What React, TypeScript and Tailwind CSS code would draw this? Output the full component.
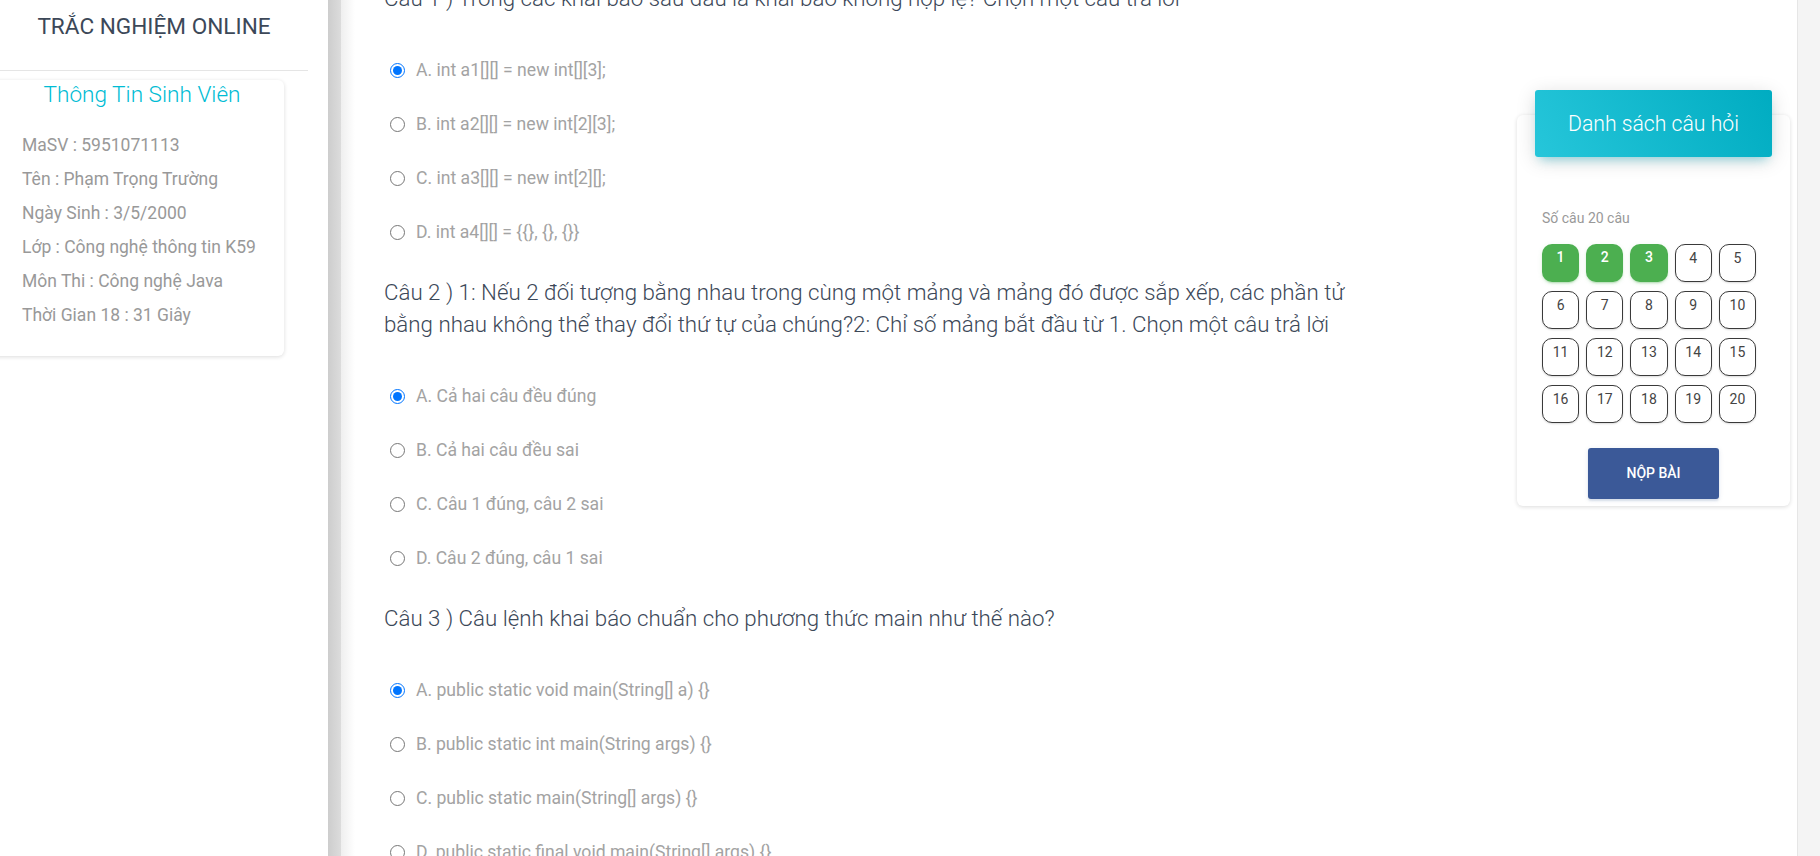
const student = [
  'MaSV : 5951071113',
  'Tên : Phạm Trọng Trường',
  'Ngày Sinh : 3/5/2000',
  'Lớp : Công nghệ thông tin K59',
  'Môn Thi : Công nghệ Java',
  'Thời Gian 18 : 31 Giây',
]

const questions = [
  {
    title: 'Câu 1 ) Trong các khai báo sau đâu là khai báo không hợp lệ? Chọn một câu trả lời',
    answers: ['A. int a1[][] = new int[][3];', 'B. int a2[][] = new int[2][3];', 'C. int a3[][] = new int[2][];', 'D. int a4[][] = {{}, {}, {}}'],
  },
  {
    title:
      'Câu 2 ) 1: Nếu 2 đối tượng bằng nhau trong cùng một mảng và mảng đó được sắp xếp, các phần tử bằng nhau không thể thay đổi thứ tự của chúng?2: Chỉ số mảng bắt đầu từ 1. Chọn một câu trả lời',
    answers: ['A. Cả hai câu đều đúng', 'B. Cả hai câu đều sai', 'C. Câu 1 đúng, câu 2 sai', 'D. Câu 2 đúng, câu 1 sai'],
  },
  {
    title: 'Câu 3 ) Câu lệnh khai báo chuẩn cho phương thức main như thế nào?',
    answers: [
      'A. public static void main(String[] a) {}',
      'B. public static int main(String args) {}',
      'C. public static main(String[] args) {}',
      'D. public static final void main(String[] args) {}',
    ],
  },
]

const numbers = Array.from({ length: 20 }, (_, i) => i + 1)
const done = [1, 2, 3]

export default function App() {
  return (
    <div className="flex h-[856px] w-[1820px] overflow-hidden bg-white font-['Roboto',sans-serif]">
      {/* sidebar */}
      <aside className="w-[328px] shrink-0 overflow-hidden bg-white">
        <div className="w-[308px]">
          <h1 className="pt-[12px] pb-[10px] text-center text-[22.6px] leading-[30px] text-[#3c4858]">TRẮC NGHIỆM ONLINE</h1>
          <div className="mt-[18px] h-px bg-[#e5e5e5]" />
        </div>
        <div className="mt-[9px] -ml-[10px] w-[294px] rounded-[6px] bg-white pb-[24px] pl-[32px] shadow-[0_1px_4px_0_rgba(0,0,0,0.14)]">
          <h2 className="-ml-[22px] text-center text-[22.6px] font-light leading-[30px] text-[#00bcd4]">Thông Tin Sinh Viên</h2>
          <ul className="mt-[18px]">
            {student.map((line) => (
              <li key={line} className="text-[17.5px] leading-[34px] text-[#999]">{line}</li>
            ))}
          </ul>
        </div>
      </aside>

      <div className="w-[13px] shrink-0 bg-gradient-to-r from-[#cdcdcd] to-[#dcdcdc]" />

      {/* main */}
      <main className="flex flex-1 justify-between bg-[linear-gradient(to_right,#efefef,#ffffff_14px)] pl-[43px] pr-[7px]">
        <div className="w-[990px] -mt-[18px]">
          {questions.map((q, qi) => (
            <div key={qi} className="mb-[17px]">
              <p className="mb-[29px] text-[22.3px] font-light leading-[32px] text-[#3c4858]">{q.title}</p>
              {q.answers.map((a, ai) => (
                <label key={a} className="flex h-[54px] items-center">
                  <input type="radio" name={`q${qi}`} defaultChecked={ai === 0} className="ml-[6px] mr-[11px] h-[15px] w-[15px]" />
                  <span className="text-[17.6px] text-[#a3a3a3]">{a}</span>
                </label>
              ))}
            </div>
          ))}
        </div>

        <div className="mt-[115px] h-[391px] w-[273px] rounded-[6px] bg-white shadow-[0_1px_4px_0_rgba(0,0,0,0.14)]">
          <div className="mx-[18px] -mt-[25px] flex h-[67px] items-center justify-center rounded-[3px] bg-[linear-gradient(60deg,#26c6da,#00acc1)] shadow-[0_4px_20px_0_rgba(0,0,0,0.14),0_7px_10px_-5px_rgba(0,188,212,0.4)]">
            <span className="text-[21.2px] font-light text-white">Danh sách câu hỏi</span>
          </div>
          <div className="pl-[25px] pr-[16px]">
            <p className="mt-[51px] text-[14px] leading-[20px] text-[#999]">Số câu 20 câu</p>
            <div className="mt-[16px] grid w-[214px] grid-cols-5 gap-x-[7px] gap-y-[9px]">
              {numbers.map((n) =>
                done.includes(n) ? (
                  <div
                    key={n}
                    className="h-[38px] rounded-[10px] bg-[#4caf50] pt-[3px] text-center text-[14px] font-medium leading-[20px] text-white shadow-[0_2px_2px_0_rgba(76,175,80,0.14),0_3px_1px_-2px_rgba(76,175,80,0.2),0_1px_5px_0_rgba(76,175,80,0.12)]"
                  >
                    {n}
                  </div>
                ) : (
                  <div
                    key={n}
                    className="h-[38px] rounded-[10px] border border-[#3a3a3a] bg-white pt-[3px] text-center text-[14px] leading-[20px] text-[#444] shadow-[0_1px_2px_0_rgba(0,0,0,0.15)]"
                  >
                    {n}
                  </div>
                ),
              )}
            </div>
          </div>
          <div className="mt-[25px] flex justify-center">
            <button className="h-[51px] w-[131px] rounded-[3px] bg-[#3b5998] text-[14px] font-medium uppercase text-white shadow-[0_2px_2px_0_rgba(59,89,152,0.14),0_1px_5px_0_rgba(59,89,152,0.12)]">
              Nộp bài
            </button>
          </div>
        </div>
      </main>

      <div className="w-[23px] shrink-0 border-l border-[#e6e6e6] bg-[#f4f4f4]" />
    </div>
  )
}
